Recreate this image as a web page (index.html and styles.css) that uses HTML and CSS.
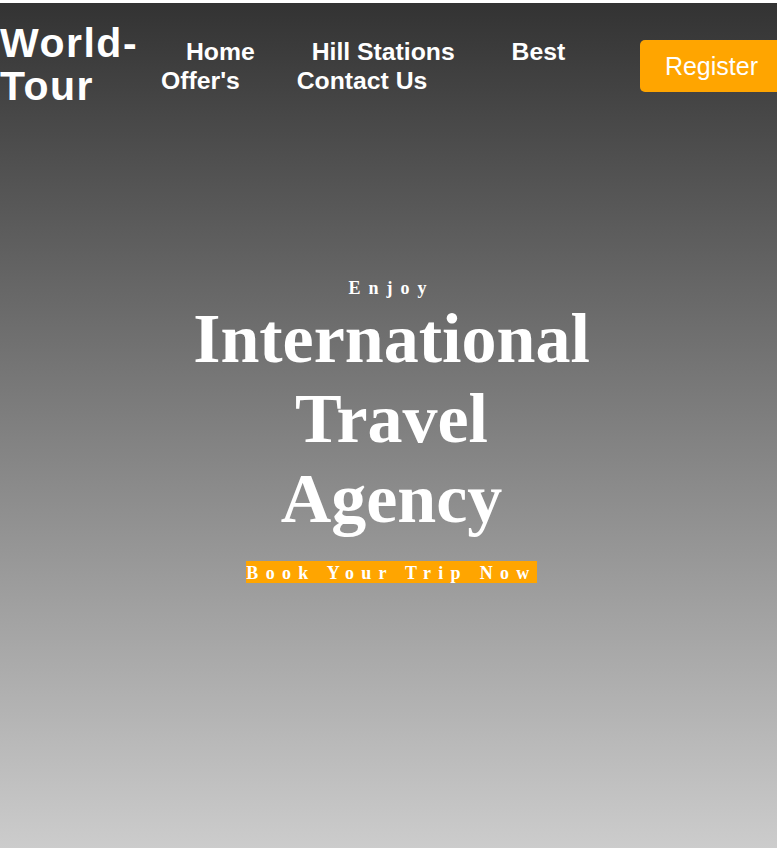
FILE: index.html
```html
<!DOCTYPE html>
<html lang="en">
<head>
<meta charset="utf-8">
<title>World-Tour</title>
<link rel="stylesheet" href="styles.css">
</head>
<body>
<div class="page">
  <header class="header">
    <div class="logo">World-Tour</div>
    <nav class="nav">
      <a href="#">Home</a> <a href="#">Hill Stations</a> <a href="#">Best Offer's</a> <a href="#">Contact Us</a>
    </nav>
    <a class="register" href="#">Register</a>
  </header>
  <section class="hero">
    <p class="kicker">Enjoy</p>
    <h1 class="title">International Travel Agency</h1>
    <p class="cta"><span class="cta-label">Book Your Trip Now</span></p>
  </section>
</div>
</body>
</html>
```

FILE: styles.css
```css
html, body {
  margin: 0;
  padding: 0;
  background: #ffffff;
  overflow: hidden;
}

.page {
  width: 783px;
  margin-top: 3px;
  height: 845px;
  background: linear-gradient(to bottom, #333333, #cccccc);
  color: #ffffff;
}

.header {
  display: flex;
  align-items: center;
  padding: 19px 0 20px;
}

.logo {
  flex: 0 0 139px;
  font-family: "Liberation Sans", Arial, sans-serif;
  font-weight: bold;
  font-size: 41px;
  line-height: 43px;
  letter-spacing: 1.5px;
}

.nav {
  flex: 0 0 456px;
  margin-left: 22px;
  margin-top: 2px;
  font-family: "Liberation Sans", Arial, sans-serif;
  font-weight: bold;
  font-size: 24.75px;
  line-height: 29px;
}

.nav a {
  color: #ffffff;
  text-decoration: none;
  margin: 0 25px;
}

.register {
  margin-left: auto;
  margin-top: 1px;
  background: #ffa500;
  color: #ffffff;
  text-decoration: none;
  font-family: "Liberation Sans", Arial, sans-serif;
  font-size: 25px;
  line-height: 29px;
  padding: 12px 25px 11px;
  border-radius: 5px;
}

.hero {
  padding-top: 150px;
  text-align: center;
  font-family: "Liberation Serif", "Times New Roman", serif;
  font-weight: bold;
}

.kicker {
  margin: 0;
  font-size: 18px;
  letter-spacing: 8px;
}

.title {
  margin: 0 auto;
  width: 420px;
  font-size: 70px;
  font-weight: bold;
}

.cta {
  margin: 24px 0 0;
  font-size: 18px;
  letter-spacing: 7.3px;
}

.cta-label {
  background: #ffa500;
  padding: 2px 0 0;
}
```
